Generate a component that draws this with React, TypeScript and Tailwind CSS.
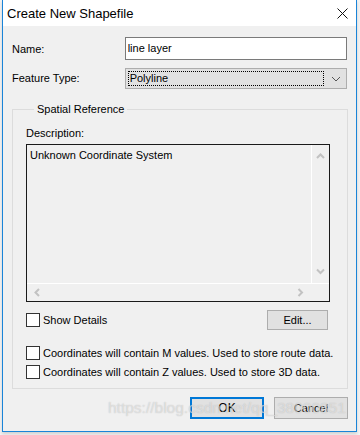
import React from 'react'

const Arrow = ({ dir }: { dir: 'up' | 'down' | 'left' | 'right' }) => {
  const pts: Record<string, string> = {
    up: '1,5 4.5,1.5 8,5',
    down: '1,1.5 4.5,5 8,1.5',
    left: '5,1 1.5,4.5 5,8',
    right: '1.5,1 5,4.5 1.5,8',
  }
  const vertical = dir === 'up' || dir === 'down'
  return (
    <svg width={vertical ? 9 : 7} height={vertical ? 7 : 9} viewBox={vertical ? '0 0 9 7' : '0 0 7 9'}>
      <polyline points={pts[dir]} fill="none" stroke="#c2c2c2" strokeWidth="2" />
    </svg>
  )
}

const CheckRow = ({ label, className = '' }: { label: string; className?: string }) => (
  <label className={`flex items-center gap-[3px] whitespace-nowrap ${className}`}>
    <span className="w-[14px] h-[14px] border border-[#333333] bg-white shrink-0" />
    <span className="leading-[14px]">{label}</span>
  </label>
)

const App = () => {
  return (
    <div className="w-[360px] h-[435px] bg-[#f3f3f3] overflow-hidden font-['Liberation_Sans',Arial,sans-serif] text-[11px] text-black relative">
      <div className="ml-[2px] w-[355px] h-[432px] border-x border-b border-[#1a84d8] bg-[#f0f0f0] flex flex-col shadow-[0_2px_3px_rgba(0,0,0,0.15)]">
        {/* title bar */}
        <div className="h-[26px] bg-white flex items-center justify-between pl-[4px] pr-[8px] shrink-0">
          <span className="text-[13px] pt-[1px]">Create New Shapefile</span>
          <svg width="11" height="11" viewBox="0 0 11 11">
            <path d="M0.5 0.5 L10.5 10.5 M10.5 0.5 L0.5 10.5" stroke="#111" strokeWidth="1" />
          </svg>
        </div>

        <div className="flex flex-col px-[9px]">
          {/* name */}
          <div className="flex items-center mt-[11px]">
            <span className="w-[113px] pt-[1px]">Name:</span>
            <div className="w-[223px] h-[23px] border border-[#7a7a7a] bg-white flex items-center pl-[2px] pb-[1px]">
              line layer
            </div>
          </div>

          {/* feature type */}
          <div className="flex items-center mt-[8px]">
            <span className="w-[113px]">Feature Type:</span>
            <div className="w-[223px] h-[21px] border border-[#adadad] bg-[#e1e1e1] flex items-center pl-[2px] pr-[5px] gap-[7px]">
              <div className="flex-1 h-[15px] border border-dotted border-black flex items-center pl-[1px]">
                Polyline
              </div>
              <svg width="10" height="6" viewBox="0 0 10 6">
                <polyline points="1,1 5,5 9,1" fill="none" stroke="#555" strokeWidth="1" />
              </svg>
            </div>
          </div>

          {/* spatial reference group */}
          <fieldset className="mt-[13px] border border-[#dcdcdc] w-[336px] px-[13px] pb-[9px] pt-[9px]">
            <legend className="ml-[8px] px-[3px] leading-[15px]">Spatial Reference</legend>
            <div className="leading-[15px]">Description:</div>
            <div className="mt-[3px] w-[304px] h-[158px] border border-[#1a1a1a] flex flex-col">
              <div className="flex flex-1">
                <div className="flex-1 pl-[3px] pt-[3px] leading-[15px]">Unknown Coordinate System</div>
                <div className="w-[18px] border-l border-white flex flex-col items-center justify-between py-[8px]">
                  <Arrow dir="up" />
                  <Arrow dir="down" />
                </div>
              </div>
              <div className="h-[18px] flex border-t border-white">
                <div className="flex-1 flex items-center justify-between px-[7px]">
                  <Arrow dir="left" />
                  <Arrow dir="right" />
                </div>
                <div className="w-[18px]" />
              </div>
            </div>

            <div className="flex items-center justify-between mt-[8px] w-[302px]">
              <CheckRow label="Show Details" />
              <button className="w-[61px] h-[20px] border border-[#adadad] bg-[#e1e1e1] leading-none">Edit...</button>
            </div>

            <CheckRow className="mt-[16px]" label="Coordinates will contain M values. Used to store route data." />
            <CheckRow className="mt-[5px]" label="Coordinates will contain Z values. Used to store 3D data." />
          </fieldset>

          {/* buttons */}
          <div className="flex justify-end gap-[10px] mt-[8px] w-[336px]">
            <button className="w-[74px] h-[22px] border-2 border-[#0078d7] bg-[#e1e1e1] leading-none text-[12px]">OK</button>
            <button className="w-[74px] h-[22px] border border-[#adadad] bg-[#e1e1e1] leading-none">Cancel</button>
          </div>
        </div>
      </div>

      {/* csdn watermark */}
      <div className="absolute left-[108px] top-[399px] text-[15.5px] leading-[18px] text-white/45 [text-shadow:0_0_1px_rgba(150,150,150,0.6)] pointer-events-none select-none whitespace-nowrap">
        https://blog.csdn.net/qq_38000851
      </div>
    </div>
  )
}

export default App
